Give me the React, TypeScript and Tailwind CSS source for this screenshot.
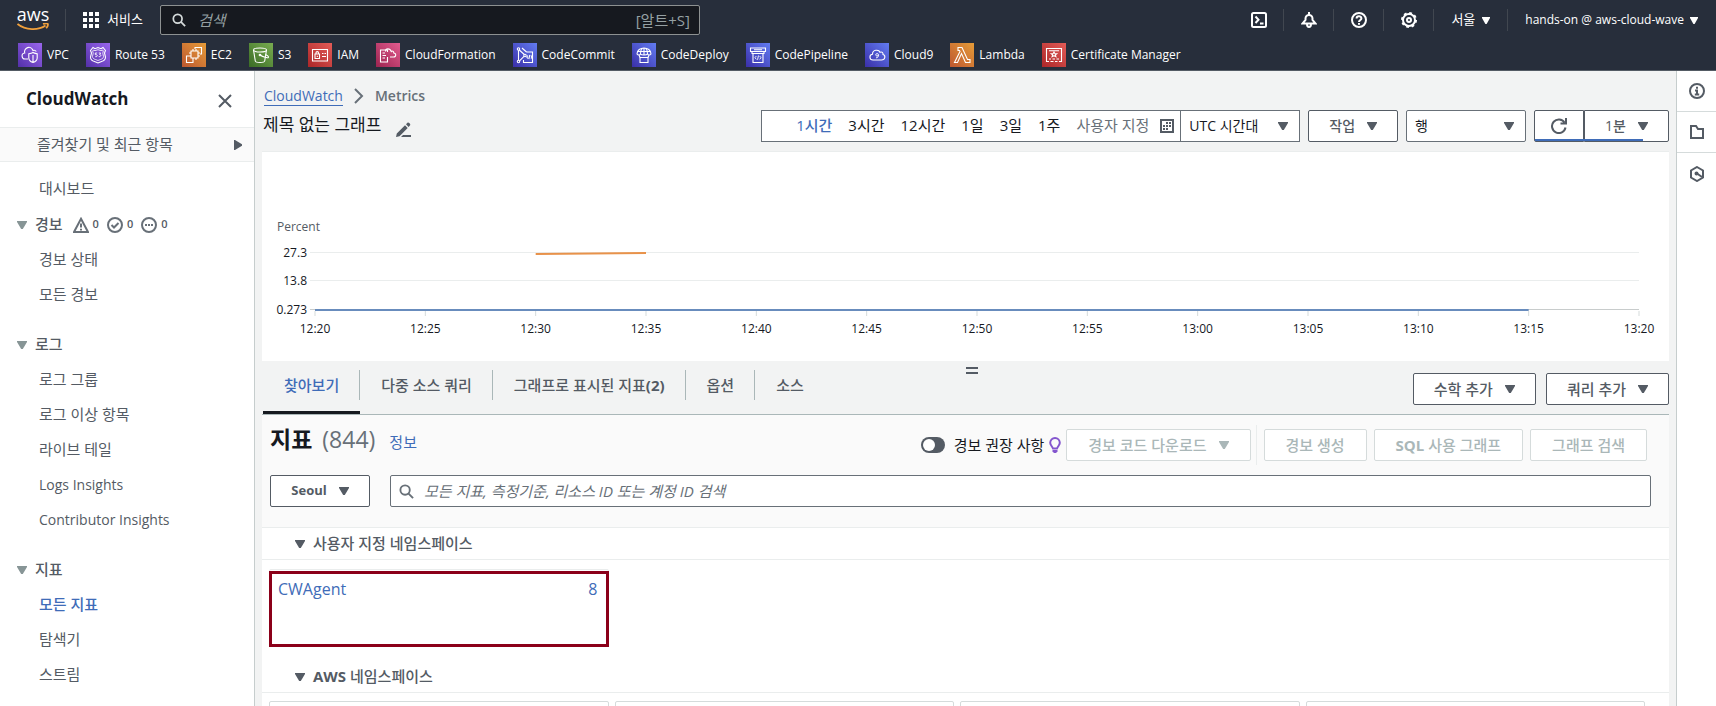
import type { ReactNode } from "react";

const Triangle = ({ className = "h-2 w-[10px]" }: { className?: string }) => (
  <svg viewBox="0 0 10 8" className={`shrink-0 fill-current ${className}`} preserveAspectRatio="none" aria-hidden="true">
    <path d="M0 0h10v1L5.8 8H4.2L0 1z" />
  </svg>
);

const SearchIcon = ({ className }: { className: string }) => (
  <svg viewBox="0 0 16 16" className={className} fill="none" stroke="currentColor" strokeWidth="2" aria-hidden="true">
    <circle cx="6.5" cy="6.5" r="5" />
    <path d="M10.2 10.2 15 15" />
  </svg>
);

/** Latin runs are set bold beside medium-weight Hangul. */
const Emphasis = ({ text }: { text: string }) => (
  <span className="whitespace-pre">
    {text.split(/([A-Z]{2,}|\(\d+\))/).map((part, i) =>
      i % 2 ? (
        <b key={i} className="font-bold">
          {part}
        </b>
      ) : (
        part
      ),
    )}
  </span>
);

const gradients = {
  purple: ["#5330a8", "#9a66ee"],
  orange: ["#bd5730", "#e69c38"],
  green: ["#3a6c25", "#79ac50"],
  red: ["#ab2628", "#e45c57"],
  pink: ["#9c2450", "#e35c8f"],
  blue: ["#3a2fa8", "#627cf2"],
};

type Service = { name: string; tone: keyof typeof gradients; art: ReactNode };

const services: Service[] = [
  {
    name: "VPC",
    tone: "purple",
    art: (
      <>
        <path d="M10 16H7.500a3 3 0 0 1-.8-6 4.300 4.300 0 0 1 8.300-2.500 2.700 2.700 0 0 1 3.300 1" />
        <path d="M15 9.500c1.500 1 3 1 4.200 1.200v4.200c0 2.200-2 3.800-4.200 4.600-2.200-.8-4.200-2.400-4.200-4.600v-4.200c1.500-.2 2.800-.4 4.200-1.200zM15 12v7" />
      </>
    ),
  },
  {
    name: "Route 53",
    tone: "purple",
    art: (
      <>
        <path d="m7 4.500 2 1.200 3-1.200 3 1.200 2-1.200 2.500 3-1 2.500 1 4c0 2.500-2 4-4 4.500L12 20l-3.500-1.500c-2-.5-4-2-4-4.500l1-4-1-2.500z" />
        <path d="m7.500 7 1.500.7 3-1 3 1 1.500-.7.8 1-.5 2.200.7 3.300c0 1.500-1.500 2.700-3 3L12 17.500 9.500 16.500c-1.500-.3-3-1.500-3-3l.7-3.300L6.700 8z" strokeWidth=".8" />
        <path d="M11.200 10H9.300v1.700h1c1.500 0 1.500 2.300-1 2M12.800 10h1.900l-1 1.600c1.700 0 1.500 2.300-1 2" strokeWidth=".9" />
      </>
    ),
  },
  {
    name: "EC2",
    tone: "orange",
    art: (
      <>
        <path d="M9 8h7v7H9zM11 8V6M14 8V6M11 17v-2M14 17v-2M9 10H7M9 13H7M18 10h-2M18 13h-2" />
        <path d="M13 6V4.500h6.500V11H18M7 13H4.500v6.500H11V17" />
      </>
    ),
  },
  {
    name: "S3",
    tone: "green",
    art: (
      <>
        <ellipse cx="11" cy="7" rx="6.500" ry="2" />
        <path d="m4.500 7 1.800 11c.3 2 9 2 9.400 0L17.500 7" />
        <path d="M11 12c3 2 8 3.500 8.500 2.200.3-1-1.500-2-3-2.800" />
        <circle cx="11" cy="12" r=".8" />
      </>
    ),
  },
  {
    name: "IAM",
    tone: "red",
    art: (
      <path d="M4.500 6.500h15v11.500h-15zM7 11h4.500v4.500H7zM8 11V9.700c0-1.500 2.500-1.500 2.500 0V11M9.300 12.700v1.300M14 10.500h1.500M16.500 10.500H18M14 13.500h4" />
    ),
  },
  {
    name: "CloudFormation",
    tone: "pink",
    art: (
      <>
        <path d="M11.500 9V7h-7v12h7v-5M6.500 10H9M6.500 12.500h3.500M6.500 15H9" />
        <path d="M14 14h3.500c3 0 2.800-4 .3-4 0-2-1.700-2.300-2.500-1.500C14 5 9.500 5 9.500 8.500" />
      </>
    ),
  },
  {
    name: "CodeCommit",
    tone: "blue",
    art: (
      <>
        <circle cx="5.500" cy="6" r="1.200" />
        <circle cx="5.500" cy="18.500" r="1.200" />
        <circle cx="12" cy="12.500" r="1.200" />
        <path d="M5.500 7.200v10M6.300 7l5 4.500M11 13.300l-4.500 4.500M9 5l4.500 4M13.500 9h6v10.500h-9V17M14.800 12.500 13.800 14l1 1.500M18 12.500l1 1.500-1 1.500M16.800 12l-1 4" />
      </>
    ),
  },
  {
    name: "CodeDeploy",
    tone: "blue",
    art: (
      <>
        <path d="M5 11c0-8 14-8 14 0-1 1.300-3 1.300-3.500 0-1 1.300-6 1.300-7 0-.5 1.300-2.500 1.300-3.500 0zM8.500 11c0-3 1-6 3.500-6s3.500 3 3.500 6M5.500 8.500h13M12 5v7M7 12l1 2.500M17 12l-1 2.500" />
        <path d="M8 14.500h8v5H8z" />
      </>
    ),
  },
  {
    name: "CodePipeline",
    tone: "blue",
    art: (
      <>
        <path d="M4.500 5h15v3.500h-15zM6 8.500v2h12v-2M7 10.500v9h10v-9M8 6.700h8" />
        <path d="m10.300 13-1.300 1.700 1.300 1.700M13.700 13l1.300 1.700-1.300 1.700M12.500 12.500l-1 4.300" strokeWidth=".9" />
      </>
    ),
  },
  {
    name: "Cloud9",
    tone: "blue",
    art: (
      <>
        <path d="M8 17c-4 0-4-5.500-.5-5.700 0-5 6.500-5 7.500-2 2-1 3.300.5 3 2.200 2.800.7 2.500 5.500-1.500 5.500z" />
        <path d="M13.500 11.800c-.5 1.800-2.800 1.500-2.800 0s2.800-1.700 2.800 0c0 2-.8 3.200-2.500 3" strokeWidth=".9" />
      </>
    ),
  },
  {
    name: "Lambda",
    tone: "orange",
    art: <path d="M8 4.500h4l5.500 12H20v3h-4.500l-4-9-4 9h-3L10 8.500 9.500 7.500H8z" />,
  },
  {
    name: "Certificate Manager",
    tone: "red",
    art: (
      <>
        <path d="M7 18.500H4.500v-13h15v13H17M7 7.800h10M7 16h2M10.500 16H13M14.500 16H17M8.500 18.500h3M13 18.500h2.500" />
        <path d="m12 9 .9 1.700h1.900l-1.400 1.200.5 1.800-1.900-1-1.900 1 .5-1.800-1.400-1.200h1.900z" />
      </>
    ),
  },
];

const ServiceIcon = ({ service }: { service: Service }) => {
  const [from, to] = gradients[service.tone];
  const id = `tile-${service.name.replace(/\s/g, "")}`;
  return (
    <svg viewBox="0 0 24 24" className="size-6 shrink-0" fill="none" aria-hidden="true">
      <defs>
        <linearGradient id={id} x1="0" y1="1" x2="1" y2="0">
          <stop offset="0" stopColor={from} />
          <stop offset="1" stopColor={to} />
        </linearGradient>
      </defs>
      <rect width="24" height="24" fill={`url(#${id})`} />
      <g stroke="#fff" strokeWidth="1.1">
        {service.art}
      </g>
    </svg>
  );
};

const HeaderDivider = () => <span className="h-[22px] w-px bg-[#414750]" />;

const topIcons: { label: string; art: ReactNode }[] = [
  {
    label: "CloudShell",
    art: (
      <>
        <rect x="1" y="1" width="14" height="14" rx="1.500" />
        <path d="m4.500 4.500 3 3.300-3 3.200M9 11.500h3.500" />
      </>
    ),
  },
  {
    label: "알림",
    art: <path d="M8 0v3M1.500 11.500h13L11.500 8V6.500a3.500 3.500 0 0 0-7 0V8zM6 12c0 4 4 4 4 0" />,
  },
  {
    label: "지원",
    art: (
      <>
        <circle cx="8" cy="8" r="7" />
        <path d="M5.600 6.500c0-3 4.800-3 4.800 0C10.400 8 8 8 8 10M8 11v1.700" />
      </>
    ),
  },
  {
    label: "설정",
    art: (
      <>
        <circle cx="8" cy="8" r="6" />
        <circle cx="8" cy="8" r="7" strokeDasharray="2.750 2.750" />
        <circle cx="8" cy="8" r="2" />
      </>
    ),
  },
];

function Header() {
  return (
    <header className="shrink-0 border-b border-[#545b64] bg-[#272e3b] text-white">
      <div className="flex h-10 items-center">
        <a href="#home" aria-label="AWS" className="ml-[17px] flex w-8 flex-col items-center">
          <span className="h-[13px] text-lg leading-[9px] font-medium">aws</span>
          <svg viewBox="0 0 32 8" className="h-2 w-8" fill="none" stroke="#f0a03c" strokeWidth="1.800" aria-hidden="true">
            <path d="M.5 1c8 6.500 21 6.500 28 1.500M26 1c2-.6 4.200-.8 4.700-.2.500.8-.3 3-1.500 4.500" />
          </svg>
        </a>
        <span className="mx-4 h-[22px] w-px bg-[#414750]" />
        <button className="flex items-center gap-2 pl-px text-[13px]">
          <svg viewBox="0 0 16 16" className="size-4 fill-white" aria-hidden="true">
            <path d="M0 0h4v4H0zM6 0h4v4H6zM12 0h4v4h-4zM0 6h4v4H0zM6 6h4v4H6zM12 6h4v4h-4zM0 12h4v4H0zM6 12h4v4H6zM12 12h4v4h-4z" />
          </svg>
          서비스
        </button>
        <label className="ml-[17px] flex h-[30px] w-[540px] items-center rounded-[2px] border border-[#8d9191] bg-[#16191f] pr-[9px] pl-[11px]">
          <SearchIcon className="size-[14px] text-[#d5dbdb]" />
          <input
            aria-label="검색"
            placeholder="검색"
            className="ml-3 min-w-0 flex-1 bg-transparent text-[15px] italic outline-none placeholder:text-[#95a0a3]"
          />
          <span className="text-[15px] text-[#95a0a3]">[알트+S]</span>
        </label>
        <div className="ml-auto flex items-center">
          {topIcons.map((icon) => (
            <div key={icon.label} className="flex items-center">
              <button aria-label={icon.label} className="flex w-[49px] justify-center">
                <svg viewBox="0 0 16 16" className="size-4" fill="none" stroke="#fff" strokeWidth="2" aria-hidden="true">
                  {icon.art}
                </svg>
              </button>
              <HeaderDivider />
            </div>
          ))}
          <button className="flex items-center gap-[7px] px-[17px] text-[13px]">
            서울 <Triangle className="h-[7px] w-2" />
          </button>
          <HeaderDivider />
          <button className="flex items-center gap-[6px] pr-[18px] pl-[17px] text-xs font-medium">
            hands-on @ aws-cloud-wave <Triangle className="h-[7px] w-2" />
          </button>
        </div>
      </div>
      <nav className="flex h-[30px] items-center gap-[17px] pl-[18px]">
        {services.map((service) => (
          <a key={service.name} href={`#${service.name}`} className="flex items-center gap-[5px] text-xs font-medium whitespace-nowrap">
            <ServiceIcon service={service} />
            {service.name}
          </a>
        ))}
      </nav>
    </header>
  );
}

const alarmCounts: { label: string; art: ReactNode }[] = [
  { label: "경보 상태", art: <path d="M8 1.800 15 15H1zM8 6.500v4M8 11.700v1.800" /> },
  {
    label: "정상",
    art: (
      <>
        <circle cx="8" cy="8" r="7" />
        <path d="m4.500 8 2.500 2.500L11.500 6" />
      </>
    ),
  },
  {
    label: "데이터 부족",
    art: (
      <>
        <circle cx="8" cy="8" r="7" />
        <path d="M4 8h2M7 8h2M10 8h2" />
      </>
    ),
  },
];

const navGroups = [
  { title: "경보", items: ["경보 상태", "모든 경보"], counts: true },
  { title: "로그", items: ["로그 그룹", "로그 이상 항목", "라이브 테일", "Logs Insights", "Contributor Insights"] },
  { title: "지표", items: ["모든 지표", "탐색기", "스트림"] },
];

const NavItem = ({ label }: { label: string }) => (
  <li className="flex h-[35px] items-center pl-[39px]">
    <a
      href={`#${label}`}
      className={`${/[A-Z]/.test(label) ? "text-sm" : "text-[15px]"} ${
        label === "모든 지표" ? "font-medium text-[#3f6cb8]" : "text-[#545b64]"
      }`}
    >
      {label}
    </a>
  </li>
);

function Sidebar() {
  return (
    <aside className="w-[255px] shrink-0 overflow-hidden border-r border-[#c6cdcd] bg-white text-[#545b64]">
      <div className="flex h-14 items-center justify-between pr-[22px] pl-[26px]">
        <h2 className="text-[17px] font-bold text-[#16191f]">CloudWatch</h2>
        <button aria-label="닫기" className="pt-1">
          <svg viewBox="0 0 14 14" className="size-[14px]" stroke="#545b64" strokeWidth="2" aria-hidden="true">
            <path d="m1 1 12 12M13 1 1 13" />
          </svg>
        </button>
      </div>
      <button className="flex h-[35px] w-full items-center justify-between border-y border-[#eaeded] bg-[#fafafa] pr-3 pl-[37px] text-[15px]">
        즐겨찾기 및 최근 항목
        <svg viewBox="0 0 8 10" className="h-[10px] w-2 fill-current" aria-hidden="true">
          <path d="M0 0h1l7 4.200v1.600L1 10H0z" />
        </svg>
      </button>
      <ul className="pt-[9px]">
        <NavItem label="대시보드" />
      </ul>
      <div className="flex flex-col gap-[15px] pt-px">
        {navGroups.map((group) => (
          <section key={group.title}>
            <h3 className="flex h-[35px] items-center pl-[17px] text-[15px] font-medium">
              <Triangle className="mr-2 h-2 w-[10px] text-[#879596]" />
              {group.title}
              {group.counts && (
                <span className="ml-[10px] flex gap-2">
                  {alarmCounts.map((count) => (
                    <span key={count.label} className="flex items-center gap-1 text-[11px] font-semibold">
                      <svg viewBox="0 0 16 16" className="size-4" fill="none" stroke="#687078" strokeWidth="2" aria-label={count.label}>
                        {count.art}
                      </svg>
                      0
                    </span>
                  ))}
                </span>
              )}
            </h3>
            <ul>
              {group.items.map((item) => (
                <NavItem key={item} label={item} />
              ))}
            </ul>
          </section>
        ))}
      </div>
    </aside>
  );
}

const ranges = ["1시간", "3시간", "12시간", "1일", "3일", "1주"];

const Select = ({ label, value, className }: { label: string; value: string; className: string }) => (
  <span className={`relative flex items-center ${className}`}>
    <select aria-label={label} className="h-full w-full appearance-none bg-transparent px-2 text-sm text-[#16191f]">
      <option>{value}</option>
    </select>
    <Triangle className="pointer-events-none absolute right-[11px] h-2 w-[10px] text-[#545b64]" />
  </span>
);

function Toolbar() {
  return (
    <div className="flex h-8 gap-2 text-sm text-[#16191f]">
      <div className="flex border border-[#687078] bg-white">
        <div className="flex items-center gap-4 pr-[6px] pl-[34px] text-[15px]">
          {ranges.map((range, i) => (
            <button key={range} className={i === 0 ? "font-medium text-[#3f6cb8]" : ""}>
              {range}
            </button>
          ))}
          <button className="flex items-center gap-[11px] text-[#687078]">
            사용자 지정
            <svg viewBox="0 0 14 14" className="size-[14px]" aria-hidden="true">
              <path d="M0 0h14v14H0z" fill="#545b64" />
              <path d="M2 2h10v10H2z" fill="#fff" />
              <path d="M6 3h2v2H6zM9 3h2v2H9zM3 6h2v2H3zM6 6h2v2H6zM9 6h2v2H9zM3 9h2v2H3zM6 9h2v2H6z" fill="#545b64" />
            </svg>
          </button>
        </div>
        <Select label="시간대" value="UTC 시간대" className="w-[119px] border-l border-[#687078]" />
      </div>
      <button className="flex items-center gap-3 rounded-[2px] border border-[#545b64] bg-white px-5 font-medium text-[#545b64]">
        작업 <Triangle />
      </button>
      <Select label="그래프 유형" value="행" className="w-[120px] rounded-[2px] border border-[#687078] bg-white" />
      <div className="relative flex">
        <button aria-label="새로 고침" className="flex w-[50px] items-center justify-center rounded-l-[2px] border border-[#545b64] bg-white">
          <svg viewBox="0 0 16 16" className="size-4" fill="none" stroke="#545b64" strokeWidth="2" aria-hidden="true">
            <path d="M14.500 9.500A6.800 6.800 0 1 1 13.500 4.500M15 0v5.500H9.500" />
          </svg>
        </button>
        <button className="flex items-center gap-3 rounded-r-[2px] border border-[#545b64] bg-white px-5 font-medium text-[#545b64]">
          1분 <Triangle />
        </button>
        <span className="absolute bottom-px left-px h-[2px] w-4/5 bg-[#3f6cb8]" />
      </div>
    </div>
  );
}

const times = ["12:20", "12:25", "12:30", "12:35", "12:40", "12:45", "12:50", "12:55", "13:00", "13:05", "13:10", "13:15", "13:20"];
const at = (i: number) => `${(i / 12) * 100}%`;
const levels = [
  { label: "27.3", y: 101 },
  { label: "13.8", y: 129 },
  { label: "0.273", y: 158 },
];

function Chart() {
  return (
    <div className="h-[210px] shrink-0 border-t border-[#eaeded] bg-white pr-[30px] pl-[53px]">
      <svg className="h-full w-full overflow-visible text-xs" fill="#16191f" role="img" aria-label="Percent">
        <text x="-38" y="79" fill="#545b64">
          Percent
        </text>
        {levels.map(({ label, y }) => (
          <g key={label}>
            <line x1="-5" x2="100%" y1={y - 0.5} y2={y - 0.5} stroke={y === 158 ? "#c8cccc" : "#eaeded"} />
            <text x="-8" y={y + 4} textAnchor="end">
              {label}
            </text>
          </g>
        ))}
        {times.map((time, i) => (
          <g key={time}>
            <line x1={at(i)} x2={at(i)} y1="159" y2="164" stroke="#d5dbdb" />
            <text x={at(i)} y="181" textAnchor="middle">
              {time}
            </text>
          </g>
        ))}
        <line x1="0" x2={at(11)} y1="158" y2="158" stroke="#688cbd" strokeWidth="2" />
        <line x1={at(2)} x2={at(3)} y1="102" y2="101" stroke="#e8924a" strokeWidth="2" />
      </svg>
    </div>
  );
}

const tabs = ["찾아보기", "다중 소스 쿼리", "그래프로 표시된 지표(2)", "옵션", "소스"];

function Tabs() {
  return (
    <div className="relative flex h-[54px] shrink-0 justify-between border-b border-[#aab7b8] pl-px">
      <div role="tablist" className="flex">
        {tabs.map((tab, i) => (
          <button
            key={tab}
            role="tab"
            aria-selected={i === 0}
            className={`flex border-b-[3px] pt-[9px] text-[15px] font-medium ${
              i === 0 ? "border-[#16191f] text-[#3f6cb8]" : "border-transparent text-[#545b64]"
            }`}
          >
            <span className={`flex h-[30px] items-center pr-5 pl-[21px] ${i < tabs.length - 1 ? "border-r border-[#aab7b8]" : ""}`}>
              <Emphasis text={tab} />
            </span>
          </button>
        ))}
      </div>
      <span className="absolute top-[6px] left-1/2 h-[7px] w-3 border-y-2 border-[#545b64]" />
      <div className="flex gap-[10px] pt-3">
        {["수학 추가", "쿼리 추가"].map((label) => (
          <button key={label} className="flex h-8 items-center gap-3 rounded-[2px] border border-[#545b64] bg-white px-5 text-[15px] font-medium text-[#545b64]">
            {label} <Triangle />
          </button>
        ))}
      </div>
    </div>
  );
}

const disabledButton = "flex h-8 items-center gap-3 rounded-[2px] border border-[#d5dbdb] bg-white px-[21px] text-[15px] font-medium text-[#aab7b8]";

const SectionTitle = ({ children }: { children: string }) => (
  <h3 className="flex h-8 items-center gap-2 border-b border-[#eaeded] pl-[33px] text-[15px] font-medium text-[#545b64]">
    <Triangle />
    <Emphasis text={children} />
  </h3>
);

function Metrics() {
  return (
    <section className="min-h-0 flex-1 overflow-hidden bg-white">
      <div className="border-b border-[#eaeded] bg-[#fafafa] pb-[20px] pl-2">
        <div className="flex h-[60px] items-center justify-between pr-[22px]">
          <div className="flex items-baseline pb-[11px]">
            <h1 className="flex gap-[10px] text-[23px] font-bold text-[#16191f]">
              지표 <span className="font-normal text-[#687078]">(844)</span>
            </h1>
            <a href="#info" className="ml-[14px] text-[15px] text-[#3f6cb8]">
              정보
            </a>
          </div>
          <div className="flex items-center">
            <label className="flex items-center gap-[9px] text-[15px] text-[#16191f]">
              <input
                type="checkbox"
                className="relative h-4 w-6 appearance-none rounded-full bg-[#545b64] before:absolute before:top-[2px] before:left-[2px] before:size-3 before:rounded-full before:bg-white"
              />
              경보 권장 사항
            </label>
            <svg viewBox="0 0 12 16" className="mr-[5px] ml-[5px] h-4 w-3" fill="none" stroke="#8456ce" strokeWidth="2" aria-hidden="true">
              <path d="M6 1a4.800 4.800 0 0 0-4.800 4.800C1.200 8 3 9 4 11.500h4c1-2.500 2.800-3.500 2.800-5.700A4.800 4.800 0 0 0 6 1zM3.500 14h5M4.500 15.500h3" />
            </svg>
            <button disabled className={disabledButton}>
              경보 코드 다운로드 <Triangle />
            </button>
            <span className="mr-[7px] ml-[5px] h-10 w-px bg-[#eaeded]" />
            <div className="flex gap-[7px]">
              {["경보 생성", "SQL 사용 그래프", "그래프 검색"].map((label) => (
                <button key={label} disabled className={disabledButton}>
                  <Emphasis text={label} />
                </button>
              ))}
            </div>
          </div>
        </div>
        <div className="flex h-8 gap-5 pr-[18px]">
          <button className="flex w-[100px] items-center justify-center gap-3 rounded-[2px] border border-[#545b64] bg-white text-[13px] font-bold text-[#545b64]">
            Seoul <Triangle />
          </button>
          <label className="flex flex-1 items-center rounded-[2px] border border-[#687078] bg-white pl-2">
            <SearchIcon className="size-[15px] text-[#687078]" />
            <input
              aria-label="지표 검색"
              placeholder="모든 지표, 측정기준, 리소스 ID 또는 계정 ID 검색"
              className="ml-[10px] min-w-0 flex-1 bg-transparent text-[15px] italic outline-none placeholder:text-[#687078]"
            />
          </label>
        </div>
      </div>
      <SectionTitle>사용자 지정 네임스페이스</SectionTitle>
      <div className="grid grid-cols-4 gap-[6px] pt-[9px] pr-6 pb-[14px] pl-[7px]">
        <a href="#CWAgent" className="relative flex h-[78px] justify-between rounded-[2px] border border-[#eaeded] pt-[7px] pr-[10px] pl-2 text-base text-[#3f6cb8]">
          <span>CWAgent</span>
          <span>8</span>
          <span className="absolute inset-x-[-1px] top-px bottom-[-1px] border-3 border-[#8b0019]" />
        </a>
      </div>
      <SectionTitle>AWS 네임스페이스</SectionTitle>
      <div className="grid grid-cols-4 gap-[6px] pt-2 pr-6 pl-[7px]">
        {[0, 1, 2, 3].map((card) => (
          <div key={card} className="h-[78px] rounded-[2px] border border-[#d5dbdb]" />
        ))}
      </div>
    </section>
  );
}

const railIcons: { label: string; art: ReactNode }[] = [
  {
    label: "정보",
    art: (
      <>
        <circle cx="8" cy="8" r="7" />
        <path d="M8 3.700v2M6 7.500h2v4M5.800 11.500h4.400" />
      </>
    ),
  },
  { label: "폴더", art: <path d="M2 2h5l2 3h5v9H2z" /> },
  {
    label: "진단",
    art: (
      <>
        <path d="m8 1 6 3.500v7L8 15l-6-3.500v-7z" />
        <path d="m8 7.500 5 3.500" />
        <circle cx="7.500" cy="7.500" r="1" />
      </>
    ),
  },
];

function Rail() {
  return (
    <aside className="w-10 shrink-0 border-l border-[#c6cdcd] bg-white">
      {railIcons.map((icon, i) => (
        <button
          key={icon.label}
          aria-label={icon.label}
          className={`flex h-[41px] w-full items-center justify-center ${i < 2 ? "border-b border-[#d5dbdb]" : ""}`}
        >
          <svg viewBox="0 0 16 16" className="size-4" fill="none" stroke="#545b64" strokeWidth="2" aria-hidden="true">
            {icon.art}
          </svg>
        </button>
      ))}
    </aside>
  );
}

export default function App() {
  return (
    <div className="flex h-screen flex-col overflow-hidden font-['Open_Sans','Noto_Sans_CJK_KR',sans-serif]">
      <Header />
      <div className="flex min-h-0 flex-1">
        <Sidebar />
        <main className="flex min-w-0 flex-1 flex-col bg-[#f2f3f3] px-[7px]">
          <div className="flex shrink-0 items-end justify-between pt-[13px] pb-[9px]">
            <div>
              <nav className="flex h-6 items-center pl-[2px] text-sm">
                <a href="#cloudwatch" className="border-b border-[#3f6cb8] leading-[18px] text-[#3f6cb8]">
                  CloudWatch
                </a>
                <svg viewBox="0 0 10 16" className="mx-[11px] h-4 w-[10px]" fill="none" stroke="#687078" strokeWidth="2" aria-hidden="true">
                  <path d="m1 1 7 7-7 7" />
                </svg>
                <span className="font-semibold text-[#687078]">Metrics</span>
              </nav>
              <div className="flex h-[34px] items-center gap-[15px] pl-px text-[17px] text-[#16191f]">
                제목 없는 그래프
                <button aria-label="제목 편집" className="pt-2">
                  <svg viewBox="0 0 15 15" className="size-[15px]" aria-hidden="true">
                    <path d="m0 15 .8-3.500L9 3.300l2.700 2.700-8.200 8.200zM10 2.300l1.500-1.600c1-1 3.500 1.300 2.600 2.500L12.600 5zM7 13h8v2H5z" fill="#545b64" />
                  </svg>
                </button>
              </div>
            </div>
            <Toolbar />
          </div>
          <Chart />
          <Tabs />
          <Metrics />
        </main>
        <Rail />
      </div>
    </div>
  );
}
